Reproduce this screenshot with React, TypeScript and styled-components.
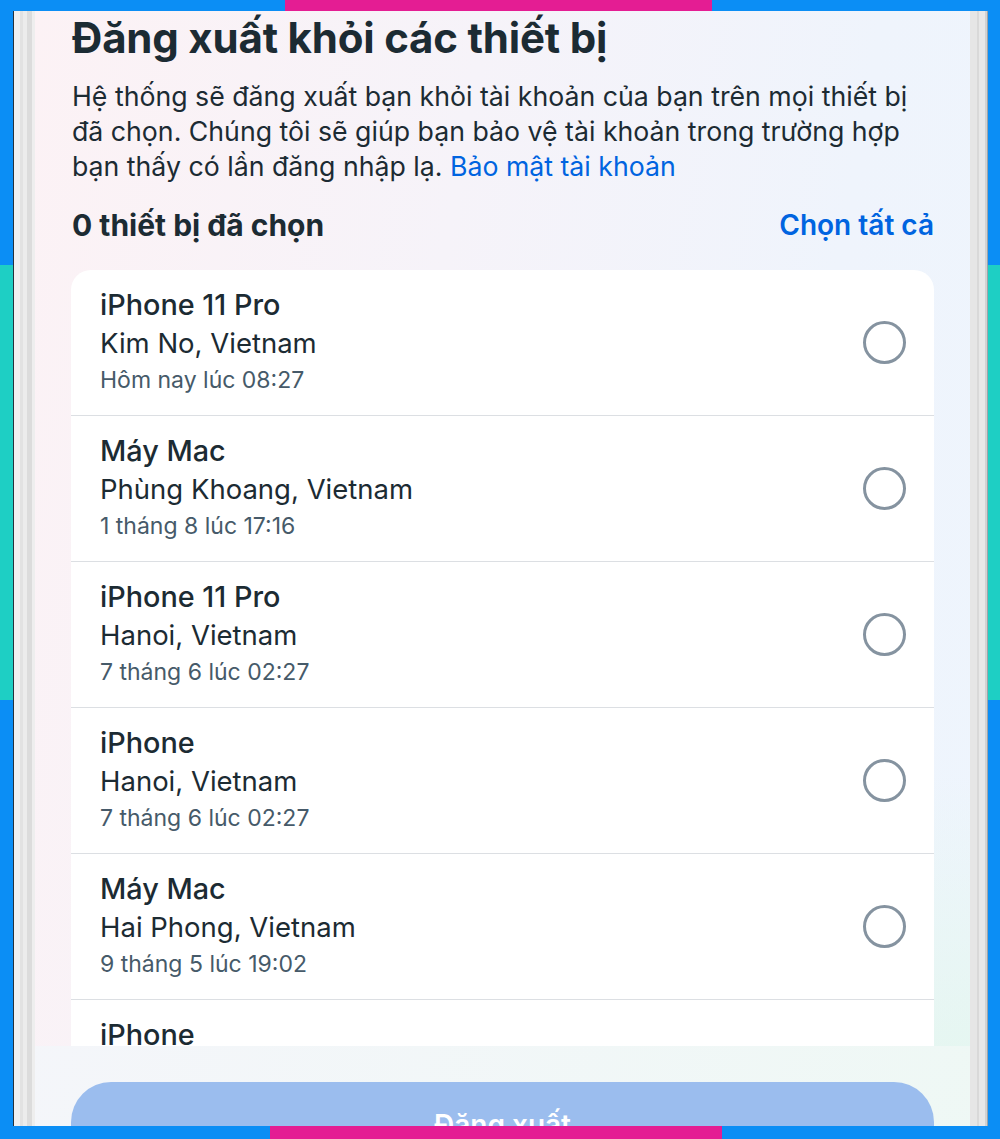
import React from "react";
import styled, { createGlobalStyle } from "styled-components";

const GlobalStyle = createGlobalStyle`
  html, body { margin: 0; padding: 0; }
  body { font-family: Inter, "Noto Sans", "Liberation Sans", sans-serif; }
  #root { width: 1000px; height: 1139px; }
`;

const BLUE = "#0b8ef5";
const PINK = "#e41d93";
const TEAL = "#1ecfc4";

const Frame = styled.div`
  width: 1000px;
  height: 1139px;
  display: flex;
  flex-direction: column;
  background: ${BLUE};
  overflow: hidden;
`;

const HBar = styled.div<{ $h: number }>`
  height: ${(p) => p.$h}px;
  flex-shrink: 0;
  display: flex;
`;

const Segment = styled.div<{ $size?: number; $color: string; $vertical?: boolean }>`
  background: ${(p) => p.$color};
  ${(p) =>
    p.$size !== undefined
      ? p.$vertical
        ? `height: ${p.$size}px; flex-shrink: 0;`
        : `width: ${p.$size}px; flex-shrink: 0;`
      : "flex: 1;"}
`;

const Middle = styled.div`
  flex: 1;
  min-height: 0;
  display: flex;
`;

const Rail = styled.div<{ $w: number }>`
  width: ${(p) => p.$w}px;
  flex-shrink: 0;
  display: flex;
  flex-direction: column;
`;

const LeftBezel = styled.div`
  width: 22px;
  flex-shrink: 0;
  background: linear-gradient(
    to right,
    #24323c 0 1px,
    #f0f0f0 1px 7px,
    #e2e2e2 7px 10px,
    #ececec 10px 14px,
    #dcdcdc 14px 19px,
    #eeeeee 19px 22px
  );
`;

const RightBezel = styled.div`
  width: 18px;
  flex-shrink: 0;
  background: linear-gradient(
    to right,
    #e6e6e6 0 7px,
    #d9d9d9 7px 9px,
    #e8e8e8 9px 15px,
    #d2d2d2 15px 17px,
    #9aa3a9 17px 18px
  );
`;

const Screen = styled.div`
  flex: 1;
  min-width: 0;
  display: flex;
  flex-direction: column;
  overflow: hidden;
  background:
    radial-gradient(ellipse 70% 45% at 100% 100%, rgba(226, 247, 236, 0.9), rgba(226, 247, 236, 0) 70%),
    linear-gradient(100deg, #fcf2f5 0%, #f6f3f9 40%, #eff4fc 75%, #eef5fd 100%);
`;

const Scroll = styled.div`
  flex: 1;
  min-height: 0;
  overflow: hidden;
  padding: 3px 36px 0 36px;
`;

const Title = styled.h1`
  margin: 0 0 0 1px;
  font-size: 42px;
  line-height: 48px;
  font-weight: 700;
  color: #1c2b33;
  letter-spacing: -0.2px;
  white-space: nowrap;
`;

const Description = styled.p`
  margin: 17px 0 0 1px;
  font-size: 26.7px;
  line-height: 35px;
  color: #1c2b33;
  font-weight: 400;
`;

const Link = styled.a`
  color: #0064e0;
  text-decoration: none;
`;

const HeaderRow = styled.div`
  margin-top: 19px;
  height: 44px;
  display: flex;
  align-items: center;
  justify-content: space-between;
  padding-left: 1px;
`;

const Count = styled.span`
  font-size: 30px;
  font-weight: 700;
  color: #1c2b33;
`;

const SelectAll = styled.span`
  font-size: 28px;
  font-weight: 600;
  color: #0064e0;
`;

const Card = styled.div`
  margin-top: 23px;
  background: #ffffff;
  border-radius: 20px 20px 0 0;
  overflow: hidden;
`;

const Row = styled.div`
  display: flex;
  align-items: center;
  justify-content: space-between;
  padding: 16px 28px 17px 29px;
  border-bottom: 1px solid #dcdfe3;
`;

const Info = styled.div`
  display: flex;
  flex-direction: column;
`;

const DeviceName = styled.span`
  font-size: 28.8px;
  line-height: 38px;
  font-weight: 500;
  color: #1c2b33;
`;

const Place = styled.span`
  font-size: 27.5px;
  line-height: 38px;
  font-weight: 400;
  color: #1c2b33;
`;

const Time = styled.span`
  font-size: 23px;
  line-height: 36px;
  font-weight: 400;
  color: #465a69;
`;

const Radio = styled.span`
  width: 43px;
  height: 43px;
  box-sizing: border-box;
  border-radius: 50%;
  border: 3px solid #8593a0;
  flex-shrink: 0;
`;

const Footer = styled.div`
  box-sizing: border-box;
  height: 80px;
  flex-shrink: 0;
  padding: 36px 36px 0 36px;
  background: linear-gradient(100deg, rgba(244, 246, 250, 0.97), rgba(239, 248, 245, 0.97));
`;

const LogoutButton = styled.button`
  width: 100%;
  height: 86px;
  flex-shrink: 0;
  border: none;
  border-radius: 40px;
  background: #9bbdee;
  color: #ffffff;
  font-family: Inter, "Noto Sans", sans-serif;
  font-size: 28px;
  font-weight: 600;
  display: flex;
  align-items: center;
  justify-content: center;
  padding: 0;
`;

const devices = [
  { name: "iPhone 11 Pro", place: "Kim No, Vietnam", time: "Hôm nay lúc 08:27" },
  { name: "Máy Mac", place: "Phùng Khoang, Vietnam", time: "1 tháng 8 lúc 17:16" },
  { name: "iPhone 11 Pro", place: "Hanoi, Vietnam", time: "7 tháng 6 lúc 02:27" },
  { name: "iPhone", place: "Hanoi, Vietnam", time: "7 tháng 6 lúc 02:27" },
  { name: "Máy Mac", place: "Hai Phong, Vietnam", time: "9 tháng 5 lúc 19:02" },
  { name: "iPhone", place: "Hanoi, Vietnam", time: "7 tháng 6 lúc 02:27" },
];

export default function App() {
  return (
    <>
      <GlobalStyle />
      <Frame>
        <HBar $h={11}>
          <Segment $size={285} $color={BLUE} />
          <Segment $size={427} $color={PINK} />
          <Segment $color={BLUE} />
        </HBar>
        <Middle>
          <Rail $w={13}>
            <Segment $vertical $size={254} $color={BLUE} />
            <Segment $vertical $size={435} $color={TEAL} />
            <Segment $color={BLUE} />
          </Rail>
          <LeftBezel />
          <Screen>
            <Scroll>
              <Title>Đăng xuất khỏi các thiết bị</Title>
              <Description>
                Hệ thống sẽ đăng xuất bạn khỏi tài khoản của bạn trên mọi thiết bị
                đã chọn. Chúng tôi sẽ giúp bạn bảo vệ tài khoản trong trường hợp
                bạn thấy có lần đăng nhập lạ. <Link>Bảo mật tài khoản</Link>
              </Description>
              <HeaderRow>
                <Count>0 thiết bị đã chọn</Count>
                <SelectAll>Chọn tất cả</SelectAll>
              </HeaderRow>
              <Card>
                {devices.map((d, i) => (
                  <Row key={i}>
                    <Info>
                      <DeviceName>{d.name}</DeviceName>
                      <Place>{d.place}</Place>
                      <Time>{d.time}</Time>
                    </Info>
                    <Radio />
                  </Row>
                ))}
              </Card>
            </Scroll>
            <Footer>
              <LogoutButton>Đăng xuất</LogoutButton>
            </Footer>
          </Screen>
          <RightBezel />
          <Rail $w={12}>
            <Segment $vertical $size={254} $color={BLUE} />
            <Segment $vertical $size={435} $color={TEAL} />
            <Segment $color={BLUE} />
          </Rail>
        </Middle>
        <HBar $h={13}>
          <Segment $size={270} $color={BLUE} />
          <Segment $size={452} $color={PINK} />
          <Segment $color={BLUE} />
        </HBar>
      </Frame>
    </>
  );
}
